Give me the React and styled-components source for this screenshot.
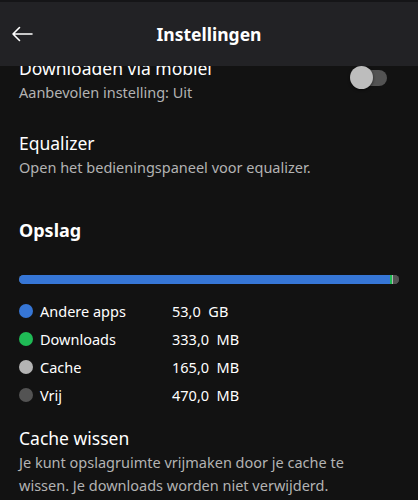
import React from 'react'
import styled, { createGlobalStyle } from 'styled-components'

const GlobalStyle = createGlobalStyle`
    html, body {
        margin: 0;
        padding: 0;
        background: #121212;
    }
    body {
        font-family: "Noto Sans", Lato, sans-serif;
        color: #ffffff;
        -webkit-font-smoothing: antialiased;
    }
`;

const storage = [
    { label: 'Andere apps', value: '53,0', unit: 'GB', color: '#3676d6', share: 97.6 },
    { label: 'Downloads', value: '333,0', unit: 'MB', color: '#1fba55', share: 0.6 },
    { label: 'Cache', value: '165,0', unit: 'MB', color: '#b3b3b3', share: 0.3 },
    { label: 'Vrij', value: '470,0', unit: 'MB', color: '#535353', share: 1.5 },
]

function App() {
    return (
        <>
            <GlobalStyle />
            <Screen>
                <Header>
                    <BackButton aria-label="Terug">
                        <svg width="22" height="16" viewBox="0 0 22 16" fill="none">
                            <path d="M21 8H2M8.5 1.5L2 8l6.5 6.5" stroke="#fff" strokeWidth="1.6" strokeLinecap="round" strokeLinejoin="round" />
                        </svg>
                    </BackButton>
                    <HeaderTitle>Instellingen</HeaderTitle>
                </Header>
                <Content>
                    <SettingRow clipped>
                        <RowText>
                            <Title>Downloaden via mobiel</Title>
                            <Sub>Aanbevolen instelling: Uit</Sub>
                        </RowText>
                        <Toggle />
                    </SettingRow>
                    <SettingRow>
                        <RowText>
                            <Title>Equalizer</Title>
                            <Sub>Open het bedieningspaneel voor equalizer.</Sub>
                        </RowText>
                    </SettingRow>
                    <SectionTitle>Opslag</SectionTitle>
                    <Bar>
                        {storage.map(s => (
                            <BarPart key={s.label} color={s.color} style={{ width: s.share + '%' }} />
                        ))}
                    </Bar>
                    <Legend>
                        {storage.map(s => (
                            <LegendRow key={s.label}>
                                <Dot color={s.color} />
                                <LegendLabel>{s.label}</LegendLabel>
                                <LegendValue>{s.value}&nbsp;&nbsp;{s.unit}</LegendValue>
                            </LegendRow>
                        ))}
                    </Legend>
                    <SettingRow gap="21px">
                        <RowText>
                            <Title>Cache wissen</Title>
                            <Sub wide>Je kunt opslagruimte vrijmaken door je cache te wissen. Je downloads worden niet verwijderd.</Sub>
                        </RowText>
                    </SettingRow>
                </Content>
            </Screen>
        </>
    )
}

const Screen = styled.div`
    width: 418px;
    height: 500px;
    overflow: hidden;
    background: #121212;
    display: flex;
    flex-direction: column;
`;

const Header = styled.div`
    height: 64px;
    flex-shrink: 0;
    background: #222225;
    border-top: 2px solid #151517;
    display: flex;
    align-items: center;
    justify-content: center;
    position: relative;
    z-index: 2;
`;

const BackButton = styled.button`
    position: absolute;
    left: 11px;
    top: 24px;
    background: none;
    border: none;
    padding: 0;
    display: flex;
`;

const HeaderTitle = styled.h1`
    margin: 0;
    font-size: 17.5px;
    font-weight: 700;
    line-height: 22px;
`;

const Content = styled.div`
    flex: 1;
    overflow: hidden;
    padding: 0 19px;
    display: flex;
    flex-direction: column;
    & > * {
        flex-shrink: 0;
    }
`;

const SettingRow = styled.div`
    display: flex;
    align-items: center;
    justify-content: space-between;
    margin-top: ${p => (p.clipped ? '-9px' : p.gap || '28px')};
`;

const RowText = styled.div`
    display: flex;
    flex-direction: column;
    gap: 2px;
`;

const Title = styled.div`
    font-size: 17.5px;
    line-height: 22px;
    color: #ffffff;
`;

const Sub = styled.div`
    font-size: 14.5px;
    line-height: 23px;
    color: #b3b3b3;
    max-width: ${p => (p.wide ? '350px' : 'none')};
`;

const Toggle = styled.div`
    width: 36px;
    height: 16px;
    border-radius: 8px;
    background: #535353;
    position: relative;
    margin-right: 12px;
    margin-top: -6px;
    &::before{
        content: '';
        position: absolute;
        left: -1px;
        top: -4px;
        width: 23px;
        height: 23px;
        border-radius: 50%;
        background: #bdbdbd;
        box-shadow: 0 1px 3px rgba(0, 0, 0, 0.6);
    }
`;

const SectionTitle = styled.h2`
    margin: 39px 0 0;
    font-size: 18px;
    font-weight: 700;
    line-height: 24px;
`;

const Bar = styled.div`
    margin-top: 33px;
    height: 9px;
    border-radius: 5px;
    overflow: hidden;
    display: flex;
    background: #535353;
`;

const BarPart = styled.div`
    height: 100%;
    background: ${p => p.color};
`;

const Legend = styled.div`
    margin-top: 16px;
    display: flex;
    flex-direction: column;
    gap: 6px;
`;

const LegendRow = styled.div`
    display: grid;
    grid-template-columns: 21px 132px 1fr;
    align-items: center;
    height: 22px;
`;

const Dot = styled.span`
    width: 14px;
    height: 14px;
    border-radius: 50%;
    background: ${p => p.color};
`;

const LegendLabel = styled.span`
    font-size: 14.5px;
    color: #ffffff;
`;

const LegendValue = styled.span`
    font-size: 14.5px;
    color: #ffffff;
`;

export default App
